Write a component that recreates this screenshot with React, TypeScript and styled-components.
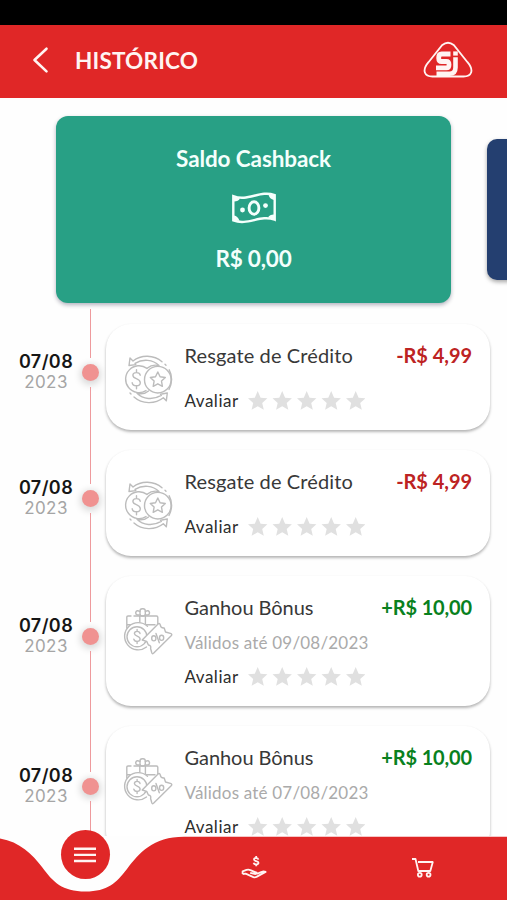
import React from 'react';
import styled, { createGlobalStyle } from 'styled-components';

const GlobalStyle = createGlobalStyle`
  *, *::before, *::after { box-sizing: border-box; }
  body { margin: 0; background: #fff; font-family: Lato, sans-serif; color: #333; }
  svg { display: block; }
`;

const Screen = styled.div`
  display: flex;
  flex-direction: column;
  width: 507px;
  height: 900px;
  overflow: hidden;
  background: #fefefe;
`;

const StatusBar = styled.div`
  flex: none;
  height: 25px;
  background: #000;
`;

const Header = styled.header`
  flex: none;
  display: flex;
  align-items: center;
  height: 73px;
  padding: 0 34px 3px 31px;
  background: #e02727;
  color: #fff4f2;
`;

const BackButton = styled.button`
  display: flex;
  width: 44px;
  padding: 0;
  border: 0;
  background: none;
  color: inherit;
`;

const Title = styled.h1`
  flex: 1;
  margin: 0;
  padding-top: 1px;
  font-size: 22.5px;
  line-height: 28px;
  font-weight: 700;
  letter-spacing: 0.2px;
`;

const Carousel = styled.section`
  flex: none;
  display: flex;
  align-items: center;
  gap: 36px;
  height: 211px;
  padding: 12px 0 0 56px;
  overflow: hidden;
`;

const BalanceCard = styled.article`
  flex: none;
  display: flex;
  flex-direction: column;
  align-items: center;
  width: 395px;
  height: 187px;
  padding-top: 29px;
  border-radius: 12px;
  background: #28a085;
  color: #f4fffc;
  box-shadow: 0 2px 4px rgba(0, 0, 40, 0.3);
`;

const BalanceText = styled.div<{ $spacing: number }>`
  font-size: 22.5px;
  line-height: 28px;
  font-weight: 700;
  letter-spacing: ${(p) => p.$spacing}px;
`;

const BanknoteSlot = styled.div`
  margin: 19px 0 21px;
`;

const NextCard = styled.div`
  flex: none;
  width: 320px;
  height: 141px;
  border-radius: 10px;
  background: #243f70;
  box-shadow: 0 2px 4px rgba(0, 0, 0, 0.35);
`;

const Timeline = styled.main`
  flex: 1;
  overflow: hidden;
`;

const Entry = styled.div<{ $height: number }>`
  display: grid;
  grid-template-columns: 80px 20px 1fr;
  height: ${(p) => p.$height}px;
  padding-right: 17px;
`;

const DateColumn = styled.div`
  align-self: center;
  padding-left: 12px;
  text-align: center;
  font-family: Inter, sans-serif;
`;

const Day = styled.div`
  font-size: 18px;
  line-height: 21px;
  font-weight: 600;
  letter-spacing: 0.4px;
  color: #161616;
`;

const Year = styled.div`
  font-size: 17px;
  line-height: 21px;
  letter-spacing: 0.4px;
  color: #a5a5a5;
`;

const Rail = styled.div`
  display: flex;
  flex-direction: column;
  align-items: center;
`;

const Line = styled.div`
  flex: 1;
  width: 1px;
  background: #ee9a9d;
`;

const Dot = styled.div`
  width: 17px;
  height: 17px;
  margin: 6px 0;
  border-radius: 50%;
  background: #f09291;
  box-shadow: 0 2px 7px 2px rgba(0, 0, 0, 0.15);
`;

const EntryCard = styled.article`
  display: flex;
  align-items: flex-start;
  margin: 15px 0 5px 6px;
  padding: 0 18px 0 17px;
  border-radius: 25px;
  background: #fff;
  box-shadow: 0 2px 3px rgba(0, 0, 0, 0.27), 0 1px 3px rgba(0, 0, 0, 0.04);
`;

const EntryIcon = styled.div`
  flex: none;
  width: 61.5px;
  padding-top: 30px;
`;

const EntryBody = styled.div`
  flex: 1;
  display: flex;
  flex-direction: column;
  padding-top: 18px;
`;

const EntryTop = styled.div`
  display: flex;
  justify-content: space-between;
  line-height: 26px;
  white-space: nowrap;
`;

const EntryTitle = styled.h2<{ $spacing: number }>`
  margin: 0;
  font-size: 20px;
  font-weight: 400;
  letter-spacing: ${(p) => p.$spacing}px;
  color: #383838;
`;

const Amount = styled.span<{ $positive: boolean }>`
  font-size: 20px;
  font-weight: 700;
  letter-spacing: ${(p) => (p.$positive ? '-0.15px' : '-0.05px')};
  color: ${(p) => (p.$positive ? '#09811e' : '#bd2323')};
`;

const Validity = styled.div`
  margin-top: 12px;
  font-size: 17px;
  line-height: 22px;
  letter-spacing: 0.2px;
  color: #aaa;
`;

const Rating = styled.div<{ $compact: boolean }>`
  display: flex;
  align-items: center;
  margin-top: ${(p) => (p.$compact ? 12 : 22)}px;
  font-size: 17px;
  line-height: 22px;
  letter-spacing: 0.5px;
  color: #2d2d2d;
`;

const RatingLabel = styled.span`
  width: 60.5px;
`;

const NavBar = styled.nav`
  position: relative;
  flex: none;
  height: 64px;
`;

const NavShape = styled.svg`
  position: absolute;
  left: 0;
  bottom: 0;
`;

const NavItems = styled.div`
  position: relative;
  display: grid;
  grid-template-columns: repeat(3, 169px);
  justify-items: center;
  align-items: start;
  margin-top: -6px;
`;

const MenuButton = styled.button`
  display: grid;
  place-items: center;
  width: 49px;
  height: 49px;
  margin-left: 1px;
  padding: 0;
  border: 0;
  border-radius: 50%;
  background: #e02727;
`;

const NavButton = styled.button`
  display: grid;
  place-items: center;
  height: 26px;
  margin: 25px 0 0;
  padding: 0;
  border: 0;
  background: none;
`;

const BackIcon = () => (
  <svg width="20" height="28" viewBox="0 0 20 28" fill="none" stroke="currentColor" strokeWidth="2.6" strokeLinecap="round" strokeLinejoin="round">
    <path d="M15.5 2.7 L3.5 14 L15.5 25.4" />
  </svg>
);

const BrandLogo = () => (
  <svg width="50" height="38" viewBox="0 0 50 38" fill="none" stroke="#fff4f2">
    <path d="M19.3 4 Q25 -.6 30.7 4 L44.5 21.2 C51.5 29.5 48.5 35.5 40.5 35.5 H9.5 C1.5 35.5 -1.5 29.5 5.5 21.2 Z" strokeWidth="1.8" />
    <path d="M27.5 13 H18.6 Q15.7 13 15.7 16.9 Q15.7 20.5 18.6 20.5 H23.4 Q26 20.5 26 23.7 Q26 26.9 23.4 26.9 H13" strokeWidth="4.8" />
    <path d="M32.5 16.3 V26.5 Q32.5 32.7 26.5 32.7 H13.5" strokeWidth="4.6" />
    <path d="M32.5 10.4 V14.6" strokeWidth="4.6" />
  </svg>
);

const BanknoteIcon = () => (
  <svg width="44" height="32" viewBox="0 0 44 32" fill="none" stroke="#f4fffc" strokeWidth="2.4">
    <path d="M1.3 4.2 C16 10 28 -2.3 42.7 3.1 V27.7 C28 22.3 16 34 1.3 28.4 Z" />
    <ellipse cx="22" cy="16" rx="4.9" ry="6.3" strokeWidth="2.9" />
    <g fill="#f4fffc" stroke="none">
      <circle cx="10.5" cy="18" r="2.4" />
      <circle cx="33.5" cy="13.6" r="2.4" />
      <path d="M2 4 L8 6.5 Q6.5 9.5 2 9.5Z M42 3 L36.5 2.5 Q37.5 7 42 8Z M2 23.5 Q6 24 7.5 29 L2 28Z M42 22.5 Q37.5 22.5 36 25.5 L42 27Z" />
    </g>
  </svg>
);

const CoinsIcon = () => (
  <svg width="50" height="50" viewBox="0 0 50 50" fill="none" stroke="#bcbcbc" strokeWidth="1.4" strokeLinecap="round" strokeLinejoin="round">
    <circle cx="34.8" cy="25.7" r="13.3" />
    <path d="M24 14.4 A13.4 13.4 0 1 0 23 36.6" />
    <path d="M34.8 18 L37.1 22.8 L42.3 23.5 L38.5 27.1 L39.4 32.3 L34.8 29.8 L30.2 32.3 L31.1 27.1 L27.3 23.5 L32.5 22.8 Z" />
    <path d="M17.2 21.2 C16.6 17.6 9.8 17.8 9.9 21.4 C10.1 25.4 17.1 24 17.3 28.8 C17.3 32.8 9.8 32.8 9.2 28.8 M13.5 15.8 V18.6 M13.5 31.8 V34.8" />
    <path d="M6 11.5 L7 4 L10 7 C18 .5 31 .5 39 7.8 M42 10.3 L43 11.3 M6 11.5 L12.8 10.6 L12 9.4 C20 4.5 30 5.5 36 11.6 Q29 10 24.5 14" />
    <path d="M44.3 39 L43.3 46.8 L40.3 43.8 C32 50.5 19 50.2 11 43 M8 40 L7 39 M44.3 39 L37.5 40.2 L38.3 41.4 C30 46.3 20 45.3 14 39.3 Q21 41 25.5 37" />
    <path d="M46.2 15.8 Q48.6 20 48.6 25.5 Q48.4 31 46 35.4" />
  </svg>
);

const GiftIcon = () => (
  <svg width="50" height="50" viewBox="0 0 50 50" fill="none" stroke="#bcbcbc" strokeWidth="1.4" strokeLinecap="round" strokeLinejoin="round">
    <path d="M3.8 22 V11 Q3.8 10 5 10 H8 M11 10 H33.5 Q34.8 10 34.8 11.3 V20 M3.8 18.7 H32 M16.8 10 V18 M22.4 10 V18" />
    <path d="M17 9 Q12.5 9.5 12.7 6.5 Q13.5 3.5 17 5.5 M22.3 9 Q26.8 9.5 26.5 6.5 Q25.8 3.5 22.3 5.5" />
    <rect x="17" y="2.7" width="5.3" height="7.3" rx="2.2" />
    <path fill="#fff" d="M24.5 20.3 A13.6 13.6 0 1 0 23.5 41" />
    <circle cx="14" cy="30.8" r="10" />
    <path d="M17 27.5 C16.5 24.6 11.4 24.8 11.4 27.6 C11.5 30.8 17 29.6 17.1 33.1 C17.1 36.2 11.5 36.2 10.8 33.1 M14.1 23.5 V25.3 M14.1 35.5 V37.5" />
    <path fill="#fff" d="M19.2 34 L35.3 17.8 Q36.7 17 37.3 19 Q37.5 22.2 41.2 22 L42.5 26 L48.2 27.7 Q49.4 28.7 48.2 29.7 L30.5 47.3 Q29 48.4 28.7 46.5 L27.6 42.5 Q28.5 39.5 25.4 39 L23.7 35.4 Z" />
    <path d="M33 27.5 L36.3 36.8" />
    <ellipse cx="30.8" cy="32.3" rx="2.1" ry="2.6" />
    <ellipse cx="38.6" cy="31.8" rx="2.1" ry="2.6" />
  </svg>
);

const Stars = () => (
  <svg width="120" height="22" viewBox="0 0 120 22" fill="#e0e0e0">
    {[0, 1, 2, 3, 4].map((i) => (
      <path key={i} transform={`translate(${i * 24.5 + 3} 1)`} d="M9.7 0 L12.6 6.7 L19.4 7.3 L14.2 11.9 L15.8 18.8 L9.7 15.2 L3.6 18.8 L5.2 11.9 L0 7.3 L6.8 6.7 Z" />
    ))}
  </svg>
);

const MenuIcon = () => (
  <svg width="24" height="18" viewBox="0 0 24 18" stroke="#fff4f2" strokeWidth="2.4">
    <path d="M1 2.8 H23 M1 8.9 H23 M1 15 H23" />
  </svg>
);

const HandMoneyIcon = () => (
  <svg width="26" height="26" viewBox="0 0 26 26" fill="none" stroke="#fff4f2" strokeWidth="1.8" strokeLinejoin="round">
    <path d="M17.4 4.7 C17 2.4 13 2.5 13 4.5 C13 6.7 17.5 5.4 17.5 7.8 C17.5 10.2 13.1 10 12.6 7.7 M15.2 1 V3 M15.2 9.2 V11.2" />
    <path d="M1.6 19 V16.3 L5.5 14.9 Q7.6 14.2 9.4 15.1 L15.6 17.7 L14.5 19 L9.2 17.8 M1.6 19 L4.6 18.6 L12.4 22.1 Q14 22.6 15.5 21.9 L24.6 16.9 Q22.5 15.8 20.7 16.9 L15.5 19" />
  </svg>
);

const CartIcon = () => (
  <svg width="22" height="22" viewBox="0 0 22 22" fill="none" stroke="#fff4f2" strokeWidth="1.8" strokeLinejoin="round">
    <path d="M0 2 H3.5 L6.3 14 H18.3 L20.8 5 H6" />
    <circle cx="7.8" cy="17.7" r="1.9" />
    <circle cx="16.6" cy="17.7" r="1.9" />
  </svg>
);

type HistoryEntry = {
  title: string;
  amount: string;
  validity?: string;
};

const entries: HistoryEntry[] = [
  { title: 'Resgate de Crédito', amount: '-R$ 4,99' },
  { title: 'Resgate de Crédito', amount: '-R$ 4,99' },
  { title: 'Ganhou Bônus', amount: '+R$ 10,00', validity: 'Válidos até 09/08/2023' },
  { title: 'Ganhou Bônus', amount: '+R$ 10,00', validity: 'Válidos até 07/08/2023' },
];

const TimelineEntry = ({ title, amount, validity }: HistoryEntry) => (
  <Entry $height={validity ? 150 : 126}>
    <DateColumn>
      <Day>07/08</Day>
      <Year>2023</Year>
    </DateColumn>
    <Rail>
      <Line />
      <Dot />
      <Line />
    </Rail>
    <EntryCard>
      <EntryIcon>{validity ? <GiftIcon /> : <CoinsIcon />}</EntryIcon>
      <EntryBody>
        <EntryTop>
          <EntryTitle $spacing={validity ? -0.05 : 0.13}>{title}</EntryTitle>
          <Amount $positive={amount.startsWith('+')}>{amount}</Amount>
        </EntryTop>
        {validity && <Validity>{validity}</Validity>}
        <Rating $compact={Boolean(validity)}>
          <RatingLabel>Avaliar</RatingLabel>
          <Stars />
        </Rating>
      </EntryBody>
    </EntryCard>
  </Entry>
);

export default function App() {
  return (
    <Screen>
      <GlobalStyle />
      <StatusBar />
      <Header>
        <BackButton aria-label="Voltar">
          <BackIcon />
        </BackButton>
        <Title>HISTÓRICO</Title>
        <BrandLogo />
      </Header>
      <Carousel>
        <BalanceCard>
          <BalanceText $spacing={-0.1}>Saldo Cashback</BalanceText>
          <BanknoteSlot>
            <BanknoteIcon />
          </BanknoteSlot>
          <BalanceText $spacing={-0.2}>R$ 0,00</BalanceText>
        </BalanceCard>
        <NextCard />
      </Carousel>
      <Timeline>
        {entries.map((entry, i) => (
          <TimelineEntry key={i} {...entry} />
        ))}
      </Timeline>
      <NavBar>
        <NavShape width="507" height="64" viewBox="0 0 507 64">
          <path d="M0 2.5 C20 6 32 18 42 31 C53 46 62 55.5 85.5 55.5 C108 55.5 116 47 127 33 C139 17 153 .7 184 .7 H507 V64 H0 Z" fill="#e02727" />
        </NavShape>
        <NavItems>
          <MenuButton aria-label="Menu">
            <MenuIcon />
          </MenuButton>
          <NavButton aria-label="Cashback">
            <HandMoneyIcon />
          </NavButton>
          <NavButton aria-label="Compras">
            <CartIcon />
          </NavButton>
        </NavItems>
      </NavBar>
    </Screen>
  );
}
